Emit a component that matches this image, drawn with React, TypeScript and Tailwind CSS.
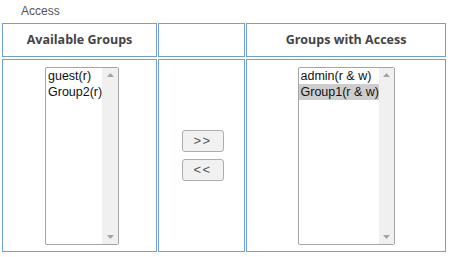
import React from "react";

function ListBox({ items, selected, width }: { items: string[]; selected?: number; width: string }) {
  return (
    <div className={`${width} h-[178px] flex border border-[#a5a5a5] rounded-[2px] bg-white overflow-hidden`}>
      <div className="flex-1 flex flex-col" style={{ fontFamily: '"Liberation Sans", Arial, sans-serif' }}>
        {items.map((it, i) => (
          <div
            key={it}
            className={`h-[16px] leading-[16px] text-[12.5px] text-[#111] pl-[2px] whitespace-nowrap ${i === selected ? "bg-[#cdcdcd]" : ""}`}
          >
            {it}
          </div>
        ))}
      </div>
      <div className="w-[17px] bg-[#f0f0f0] flex flex-col items-center justify-between py-[5px]">
        <svg width="7" height="4" viewBox="0 0 7 4"><path d="M0 4 L3.5 0 L7 4 Z" fill="#a3a3a3" /></svg>
        <svg width="7" height="4" viewBox="0 0 7 4"><path d="M0 0 L3.5 4 L7 0 Z" fill="#a3a3a3" /></svg>
      </div>
    </div>
  );
}

function Btn({ label }: { label: string }) {
  return (
    <div
      className="w-[42px] h-[22px] flex items-center justify-center border border-[#adadad] rounded-[3px] bg-[#f1f1f1] text-[#555] text-[13px] tracking-[1.5px]"
      style={{ fontFamily: '"Liberation Sans", Arial, sans-serif' }}
    >
      {label}
    </div>
  );
}

export default function App() {
  const cell = "border border-[#6f9fdb] box-border";
  return (
    <div className="w-[452px] h-[257px] bg-white relative" style={{ fontFamily: '"DejaVu Sans", Tahoma, sans-serif' }}>
      <div className="pl-[21px] pt-[2px] h-[23px] text-[12px] text-[#555]" style={{ fontFamily: '"Liberation Sans", Arial, sans-serif' }}>
        Access
      </div>
      <div className="pl-[2px] grid grid-cols-[155px_87px_200px] grid-rows-[34px_193px] gap-x-px gap-y-[2px]">
        <div className={`${cell} flex items-center justify-center text-[12.5px] font-bold text-[#444]`} style={{ fontFamily: '"Open Sans", Tahoma, sans-serif' }}>
          Available Groups
        </div>
        <div className={cell}></div>
        <div className={`${cell} flex items-center justify-center text-[12.5px] font-bold text-[#444]`} style={{ fontFamily: '"Open Sans", Tahoma, sans-serif' }}>
          Groups with Access
        </div>
        <div className={`${cell} flex justify-center pt-[7px] pl-[5px]`}>
          <ListBox items={["guest(r)", "Group2(r)"]} width="w-[74px]" />
        </div>
        <div className={`${cell} flex flex-col items-center justify-center gap-[7px] pl-[2px]`}>
          <Btn label=">>" />
          <Btn label="<<" />
        </div>
        <div className={`${cell} flex justify-center pt-[7px]`}>
          <ListBox items={["admin(r & w)", "Group1(r & w)"]} selected={1} width="w-[97px]" />
        </div>
      </div>
    </div>
  );
}
